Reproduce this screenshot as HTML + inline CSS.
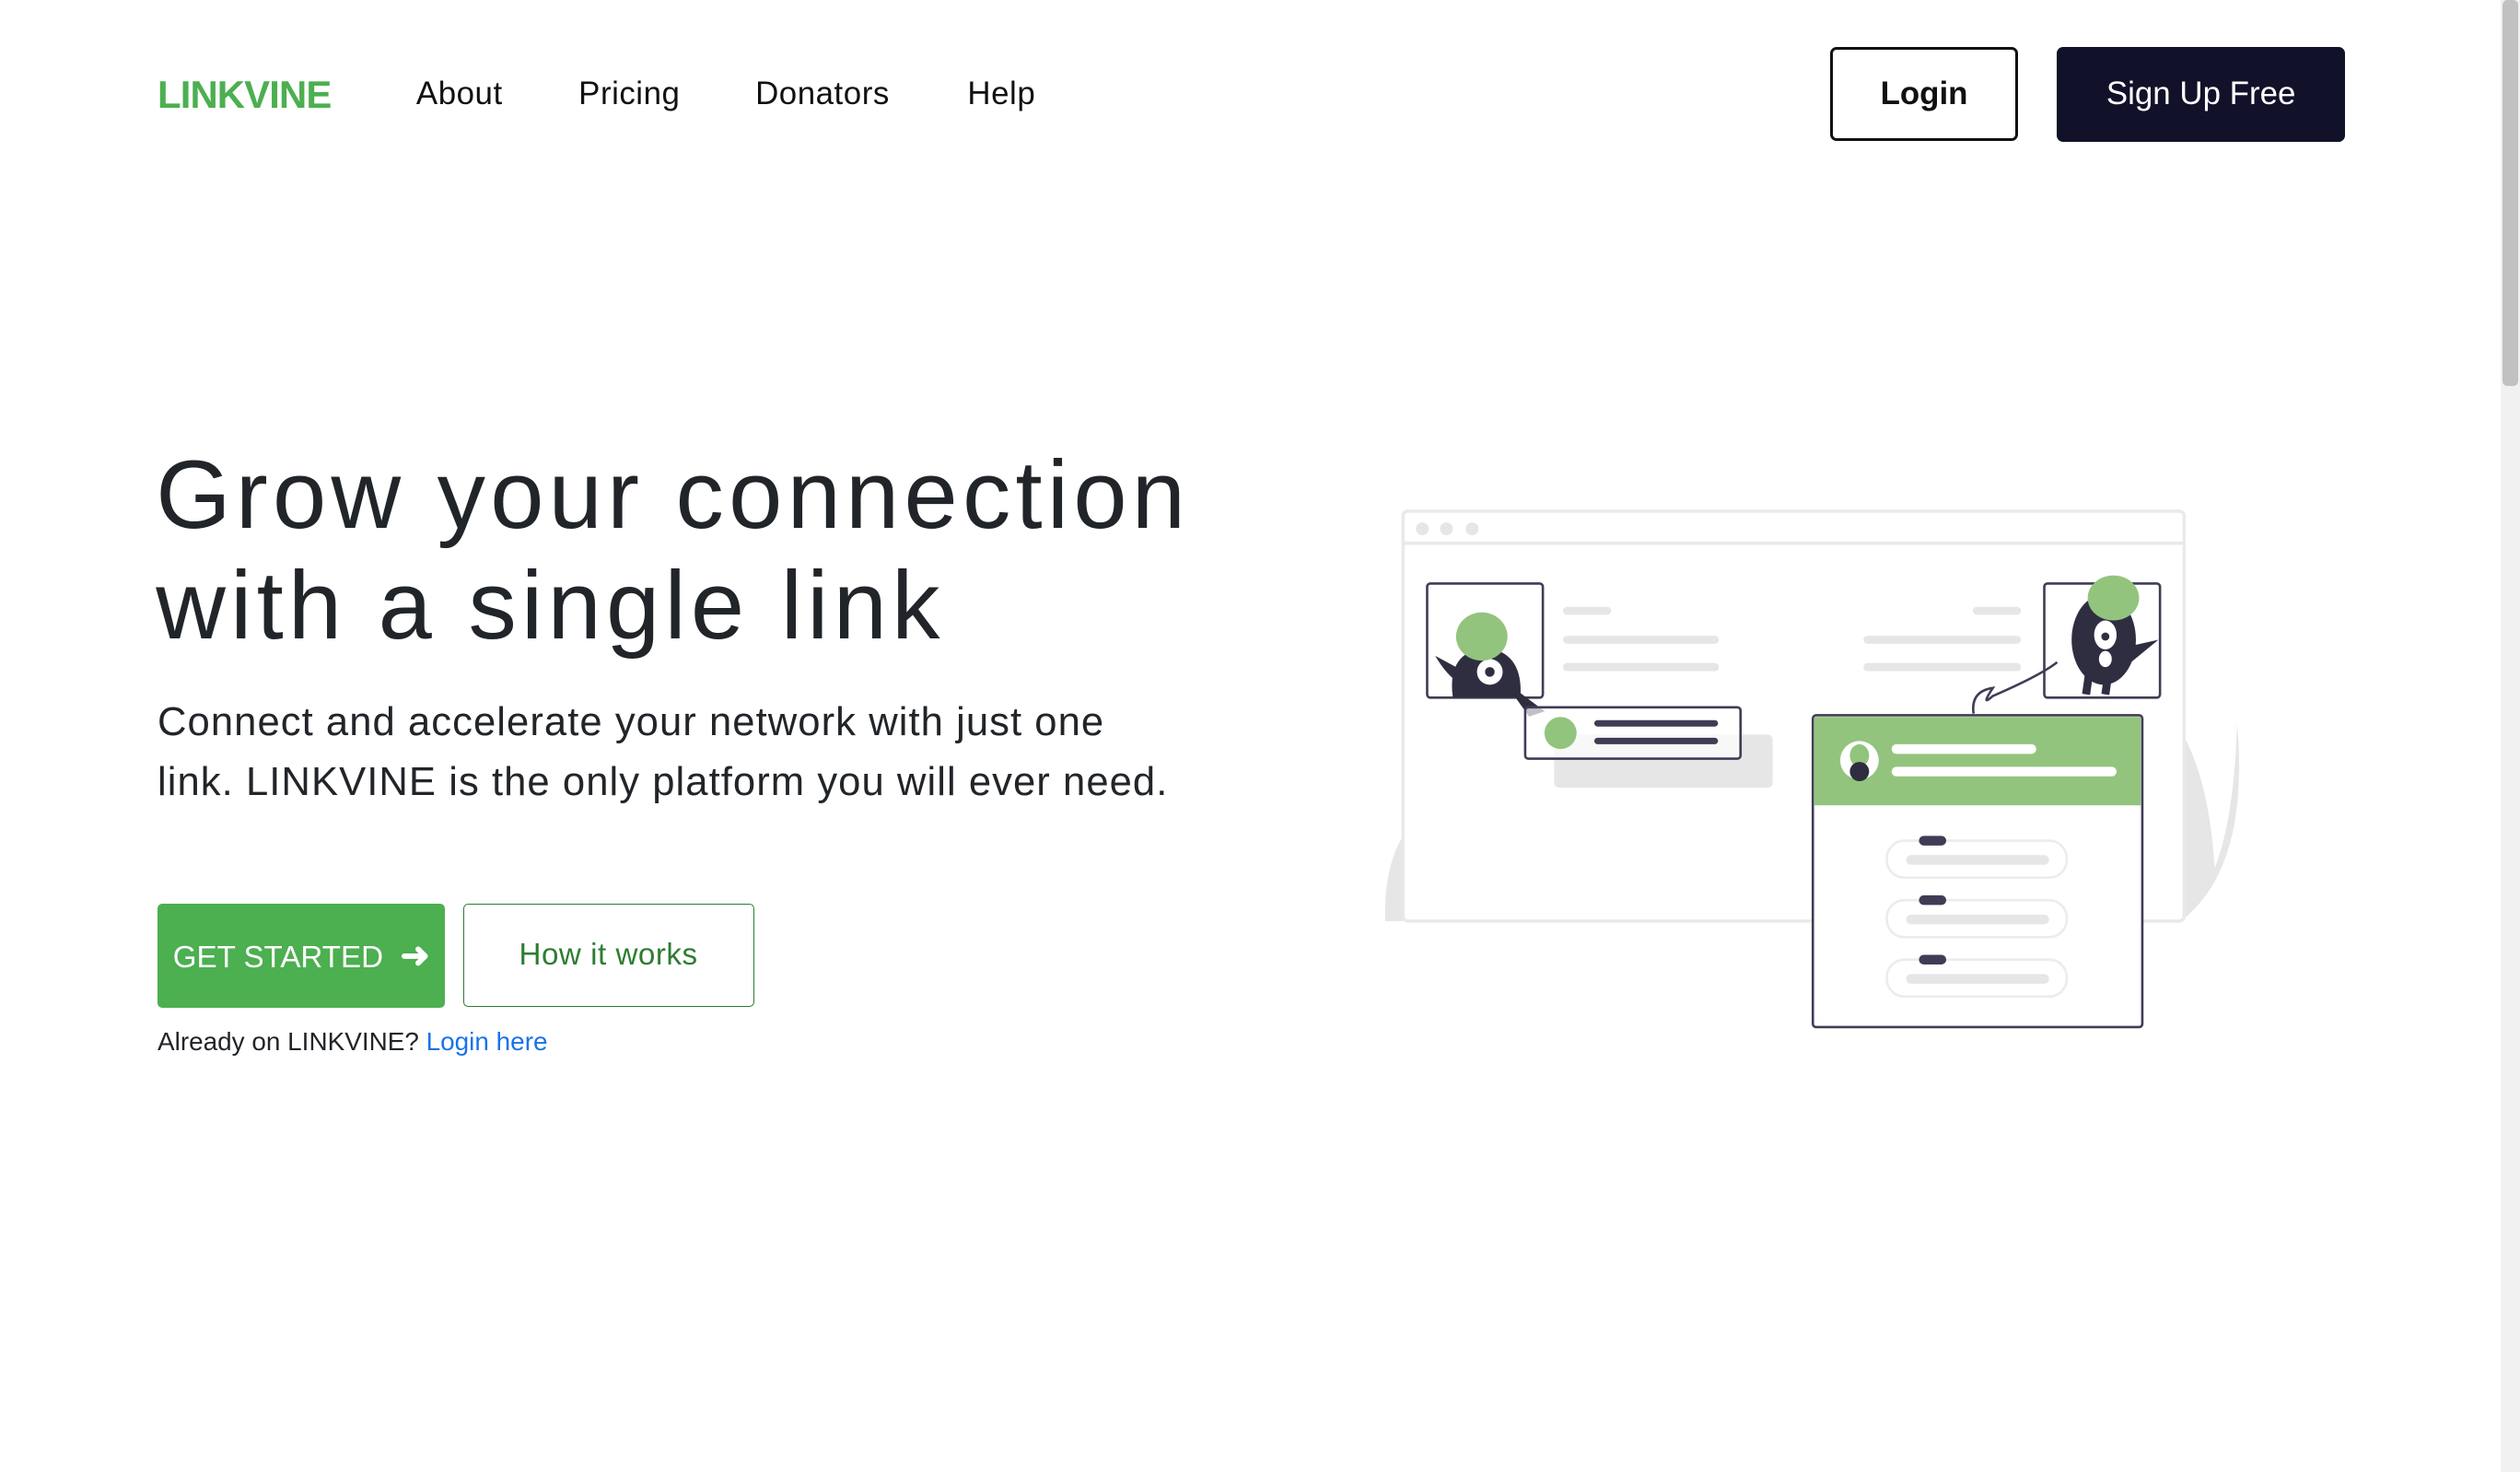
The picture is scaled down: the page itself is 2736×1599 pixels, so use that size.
<!DOCTYPE html>
<html><head><meta charset="utf-8"><style>
html,body{margin:0;padding:0;background:#fff;overflow:hidden}
body{width:2736px;height:1599px}
#w{zoom:1.7449;width:1568px;height:916px;position:relative;font-family:"Liberation Sans",sans-serif;color:#212529}
.a{position:absolute;white-space:nowrap}
.nav{font-size:20px;top:47px;color:#111;letter-spacing:0.3px}
</style></head><body><div id="w">
<div class="a" style="left:98px;top:45px;font-size:24px;font-weight:bold;color:#4caf50;letter-spacing:-0.5px">LINKVINE</div>
<div class="a nav" style="left:259px">About</div>
<div class="a nav" style="left:360px">Pricing</div>
<div class="a nav" style="left:470px">Donators</div>
<div class="a nav" style="left:602px">Help</div>
<div class="a" style="left:1139px;top:29px;width:113px;height:55px;border:2px solid #111;border-radius:4px;font-size:20px;font-weight:bold;text-align:center;line-height:55px;color:#111">Login</div>
<div class="a" style="left:1280px;top:29px;width:179px;height:59px;background:#11112a;border-radius:4px;font-size:20px;text-align:center;line-height:59px;color:#fff">Sign Up Free</div>
<div class="a" style="left:97px;top:274px;font-size:60px;line-height:69px;color:#212529;letter-spacing:3px">Grow your connection<br>with a single link</div>
<div class="a" style="left:98px;top:431px;font-size:25px;line-height:37px;color:#212529;letter-spacing:0.6px">Connect and accelerate your network with just one<br>link. LINKVINE is the only platform you will ever need.</div>
<div class="a" style="left:98px;top:562px;width:179px;height:65px;background:#4caf50;border-radius:3px;color:#fff;font-size:19px;line-height:65px;text-align:center">GET STARTED &nbsp;<b style="font-size:22px">&#10140;</b></div>
<div class="a" style="left:288px;top:562px;width:180px;height:63px;border:1px solid #2e7d32;border-radius:3px;color:#2e7d32;font-size:19px;line-height:63px;text-align:center;letter-spacing:0.3px">How it works</div>
<div class="a" style="left:98px;top:639px;font-size:16px;color:#212529">Already on LINKVINE? <span style="color:#1a73e8">Login here</span></div>
<div class="a" style="left:1556px;top:0;width:12px;height:916px;background:#f1f1f1"></div>
<div class="a" style="left:1557px;top:0;width:10px;height:240px;background:#c1c1c1;border-radius:3px"></div>
<svg class="a" style="left:0;top:0" width="1568" height="916" viewBox="0 0 1568 916">
<path d="M862 573 Q860 530 884 505 Q870 540 874 573Z" fill="#e6e6e6"/>
<path d="M1357 573 Q1400 540 1392 450 Q1390 510 1378 540 Q1375 490 1360 460Z" fill="#e6e6e6"/>
<rect x="873" y="318" width="486" height="255" rx="3" fill="#fff" stroke="#e9e9e9" stroke-width="2"/>
<line x1="873" y1="338" x2="1359" y2="338" stroke="#e9e9e9" stroke-width="2"/>
<circle cx="885" cy="329" r="4" fill="#e6e6e6"/><circle cx="900" cy="329" r="4" fill="#e6e6e6"/><circle cx="916" cy="329" r="4" fill="#e6e6e6"/>
<g stroke="#e6e6e6" stroke-width="5" stroke-linecap="round">
<line x1="975" y1="380" x2="1000" y2="380"/><line x1="975" y1="398" x2="1067" y2="398"/><line x1="975" y1="415" x2="1067" y2="415"/>
<line x1="1230" y1="380" x2="1255" y2="380"/><line x1="1162" y1="398" x2="1255" y2="398"/><line x1="1162" y1="415" x2="1255" y2="415"/>
</g>
<rect x="888" y="363" width="72" height="71" rx="2" fill="#fff" stroke="#3f3d56" stroke-width="1.5"/>
<path d="M904 434 Q900 405 925 403 Q948 406 946 434Z" fill="#2f2e41"/>
<path d="M906 415 L893 408 Q900 420 908 425Z" fill="#2f2e41"/>
<path d="M942 430 L958 442 L952 444Z" fill="#2f2e41" stroke="#2f2e41" stroke-width="3"/>
<circle cx="927" cy="418" r="8" fill="#fff"/><circle cx="927" cy="418" r="3" fill="#2f2e41"/>
<ellipse cx="922" cy="396" rx="16" ry="15" fill="#93c47d"/>
<rect x="967" y="457" width="136" height="33" rx="3" fill="#e6e6e6"/>
<rect x="949" y="440" width="134" height="32" rx="2" fill="#fff" fill-opacity="0.7" stroke="#3f3d56" stroke-width="1.5"/>
<ellipse cx="971" cy="456" rx="10" ry="10" fill="#93c47d"/>
<g stroke="#3f3d56" stroke-width="4" stroke-linecap="round"><line x1="994" y1="450" x2="1067" y2="450"/><line x1="994" y1="461" x2="1067" y2="461"/></g>
<rect x="1272" y="363" width="72" height="71" rx="2" fill="#fff" stroke="#3f3d56" stroke-width="1.5"/>
<path d="M1228 444 Q1226 430 1240 428 Q1232 440 1240 433 Q1270 420 1280 412" fill="none" stroke="#3f3d56" stroke-width="1.5"/>
<ellipse cx="1309" cy="398" rx="20" ry="28" fill="#2f2e41"/>
<path d="M1325 402 L1343 398 L1326 412Z" fill="#2f2e41"/>
<path d="M1300 418 L1298 432 M1312 418 L1310 432" stroke="#2f2e41" stroke-width="5"/>
<ellipse cx="1310" cy="395" rx="7" ry="9" fill="#fff"/><circle cx="1310" cy="396" r="2.5" fill="#2f2e41"/>
<ellipse cx="1310" cy="410" rx="4" ry="5" fill="#fff"/>
<ellipse cx="1315" cy="372" rx="16" ry="14" fill="#93c47d"/>
<rect x="1128" y="445" width="205" height="194" rx="2" fill="#fff" stroke="#3f3d56" stroke-width="1.5"/>
<rect x="1129" y="446" width="203" height="55" fill="#93c47d"/>
<circle cx="1157" cy="473" r="12" fill="#fff"/>
<ellipse cx="1157" cy="470" rx="6" ry="7" fill="#93c47d"/>
<circle cx="1157" cy="480" r="6" fill="#2f2e41"/>
<g stroke="#fff" stroke-width="6" stroke-linecap="round"><line x1="1180" y1="466" x2="1264" y2="466"/><line x1="1180" y1="480" x2="1314" y2="480"/></g>
<g fill="#fff" stroke="#ececec" stroke-width="1.5">
<rect x="1174" y="523" width="112" height="23" rx="11"/><rect x="1174" y="560" width="112" height="23" rx="11"/><rect x="1174" y="597" width="112" height="23" rx="11"/></g>
<g stroke="#e6e6e6" stroke-width="6" stroke-linecap="round"><line x1="1189" y1="535" x2="1272" y2="535"/><line x1="1189" y1="572" x2="1272" y2="572"/><line x1="1189" y1="609" x2="1272" y2="609"/></g>
<g stroke="#3f3d56" stroke-width="6" stroke-linecap="round"><line x1="1197" y1="523" x2="1208" y2="523"/><line x1="1197" y1="560" x2="1208" y2="560"/><line x1="1197" y1="597" x2="1208" y2="597"/></g>
</svg>
</div></body></html>
